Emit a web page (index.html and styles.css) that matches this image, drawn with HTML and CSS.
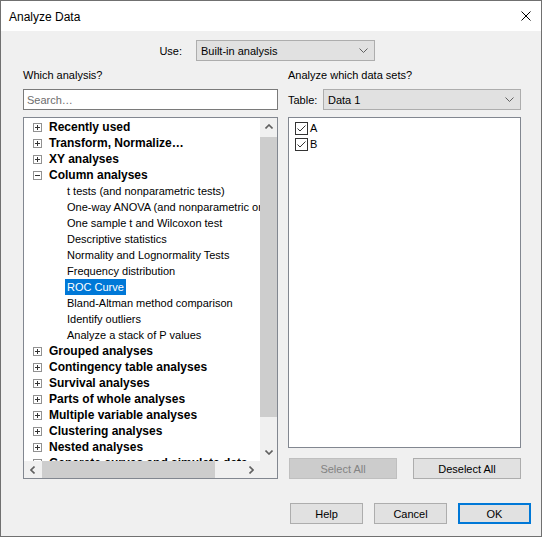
FILE: index.html
```html
<!DOCTYPE html>
<html lang="en">
  <head>
    <meta charset="UTF-8" />
    <title>Analyze Data</title>
    <link rel="stylesheet" href="styles.css">
  </head>
  <body>
    <div class="window">
      <div class="titlebar">
        <span class="title">Analyze Data</span>
        <svg class="close" width="10" height="10" viewBox="0 0 10 10">
          <path d="M0.5 0.5 L9.5 9.5 M9.5 0.5 L0.5 9.5" stroke="#000" stroke-width="1" fill="none" />
        </svg>
      </div>

      <div class="dialog">
        <div class="use-row">
          <span class="label use-label">Use:</span>
          <div class="combo use-combo">
            <span>Built-in analysis</span>
            <svg class="chevron" width="9" height="5" viewBox="0 0 9 5">
              <polyline points="0.5,0.5 4.5,4.5 8.5,0.5" stroke="#606060" fill="none" />
            </svg>
          </div>
        </div>

        <div class="columns">
          <div class="col">
            <div class="heading">Which analysis?</div>
            <input class="search" type="text" placeholder="Search…" />

            <div class="tree">
              <div class="tree-rows">
                <div class="row group"><span class="exp plus"></span>Recently used</div>
                <div class="row group"><span class="exp plus"></span>Transform, Normalize…</div>
                <div class="row group"><span class="exp plus"></span>XY analyses</div>
                <div class="row group"><span class="exp minus"></span>Column analyses</div>
                <div class="row item"><span>t tests (and nonparametric tests)</span></div>
                <div class="row item"><span>One-way ANOVA (and nonparametric or mixed)</span></div>
                <div class="row item"><span>One sample t and Wilcoxon test</span></div>
                <div class="row item"><span>Descriptive statistics</span></div>
                <div class="row item"><span>Normality and Lognormality Tests</span></div>
                <div class="row item"><span>Frequency distribution</span></div>
                <div class="row item"><span class="selected">ROC Curve</span></div>
                <div class="row item"><span>Bland-Altman method comparison</span></div>
                <div class="row item"><span>Identify outliers</span></div>
                <div class="row item"><span>Analyze a stack of P values</span></div>
                <div class="row group"><span class="exp plus"></span>Grouped analyses</div>
                <div class="row group"><span class="exp plus"></span>Contingency table analyses</div>
                <div class="row group"><span class="exp plus"></span>Survival analyses</div>
                <div class="row group"><span class="exp plus"></span>Parts of whole analyses</div>
                <div class="row group"><span class="exp plus"></span>Multiple variable analyses</div>
                <div class="row group"><span class="exp plus"></span>Clustering analyses</div>
                <div class="row group"><span class="exp plus"></span>Nested analyses</div>
                <div class="row group"><span class="exp plus"></span>Generate curves and simulate data</div>
              </div>

              <div class="vscroll">
                <div class="arrow">
                  <svg width="8" height="5" viewBox="0 0 8 5"><polyline points="0.5,4.5 4,1 7.5,4.5" stroke="#606060" stroke-width="1.6" fill="none" /></svg>
                </div>
                <div class="track"><div class="thumb"></div></div>
                <div class="arrow">
                  <svg width="8" height="5" viewBox="0 0 8 5"><polyline points="0.5,0.5 4,4 7.5,0.5" stroke="#606060" stroke-width="1.6" fill="none" /></svg>
                </div>
              </div>

              <div class="hscroll">
                <div class="arrow">
                  <svg width="5" height="8" viewBox="0 0 5 8"><polyline points="4.5,0.5 1,4 4.5,7.5" stroke="#606060" stroke-width="1.6" fill="none" /></svg>
                </div>
                <div class="track"><div class="thumb"></div></div>
                <div class="arrow">
                  <svg width="5" height="8" viewBox="0 0 5 8"><polyline points="0.5,0.5 4,4 0.5,7.5" stroke="#606060" stroke-width="1.6" fill="none" /></svg>
                </div>
              </div>

              <div class="corner"></div>
            </div>
          </div>

          <div class="col">
            <div class="heading">Analyze which data sets?</div>
            <div class="table-row">
              <span class="label">Table:</span>
              <div class="combo table-combo">
                <span>Data 1</span>
                <svg class="chevron" width="9" height="5" viewBox="0 0 9 5">
                  <polyline points="0.5,0.5 4.5,4.5 8.5,0.5" stroke="#606060" fill="none" />
                </svg>
              </div>
            </div>

            <div class="data-sets">
              <div class="check-row">
                <span class="checkbox">
                  <svg width="11" height="11" viewBox="0 0 11 11"><polyline points="1.5,5.5 4,8 9.5,2.5" stroke="#333" fill="none" /></svg>
                </span>A
              </div>
              <div class="check-row">
                <span class="checkbox">
                  <svg width="11" height="11" viewBox="0 0 11 11"><polyline points="1.5,5.5 4,8 9.5,2.5" stroke="#333" fill="none" /></svg>
                </span>B
              </div>
            </div>

            <div class="list-buttons">
              <button class="btn" disabled>Select All</button>
              <button class="btn">Deselect All</button>
            </div>
          </div>
        </div>

        <div class="dialog-buttons">
          <button class="btn">Help</button>
          <button class="btn">Cancel</button>
          <button class="btn default">OK</button>
        </div>
      </div>
    </div>
  </body>
</html>
```

FILE: styles.css
```css
body {
  margin: 0;
  font-family: "Liberation Sans", Arial, sans-serif;
  font-size: 11px;
  color: #000;
  background: #fff;
}
.window {
  width: 542px;
  height: 537px;
  box-sizing: border-box;
  border: 1px solid #707070;
  background: #f0f0f0;
  display: flex;
  flex-direction: column;
}
.titlebar {
  height: 30px;
  background: #fff;
  display: flex;
  align-items: center;
  justify-content: space-between;
  padding: 0 10px 0 8px;
}
.title {
  font-size: 12px;
  padding-top: 1px;
}
.close {
  display: block;
}
.dialog {
  flex: 1;
  padding: 0 10px 0 22px;
}
.use-row {
  display: flex;
  align-items: center;
  gap: 14px;
  margin-top: 9px;
}
.use-label {
  width: 159px;
  text-align: right;
}
.combo {
  height: 21px;
  box-sizing: border-box;
  border: 1px solid #adadad;
  background: #e1e1e1;
  display: flex;
  align-items: center;
  justify-content: space-between;
  padding: 0 6px 0 4px;
}
.use-combo {
  width: 179px;
}
.chevron {
  display: block;
}
.columns {
  display: grid;
  grid-template-columns: 255px 233px;
  column-gap: 10px;
  margin-top: 6px;
}
.heading {
  line-height: 16px;
  margin-bottom: 6px;
}
.search {
  display: block;
  width: 255px;
  height: 21px;
  box-sizing: border-box;
  margin: 0;
  border: 1px solid #7a7a7a;
  padding: 0 3px;
  font-family: inherit;
  font-size: 11px;
  outline: none;
}
.search::placeholder {
  color: #6d6d6d;
}
.tree {
  margin-top: 7px;
  height: 362px;
  box-sizing: border-box;
  border: 1px solid #828790;
  background: #fff;
  display: grid;
  grid-template-columns: 236px 17px;
  grid-template-rows: 343px 17px;
}
.tree-rows {
  overflow: hidden;
  padding-top: 1px;
}
.row {
  height: 16px;
  line-height: 16px;
  white-space: nowrap;
  display: flex;
  align-items: center;
}
.group {
  font-weight: bold;
  font-size: 12px;
  padding-left: 9px;
}
.item {
  padding-left: 41px;
}
.item span {
  padding: 0 2px;
}
.item .selected {
  background: #0078d7;
  color: #fff;
}
.exp {
  width: 9px;
  height: 9px;
  box-sizing: border-box;
  border: 1px solid #919191;
  margin-right: 7px;
  position: relative;
  flex: none;
}
.exp::before,
.plus::after {
  content: "";
  position: absolute;
  background: #333;
}
.exp::before {
  left: 1px;
  top: 3px;
  width: 5px;
  height: 1px;
}
.plus::after {
  left: 3px;
  top: 1px;
  width: 1px;
  height: 5px;
}
.vscroll,
.hscroll {
  background: #f0f0f0;
  display: flex;
}
.vscroll {
  flex-direction: column;
}
.arrow {
  width: 17px;
  height: 17px;
  flex: none;
  display: flex;
  align-items: center;
  justify-content: center;
}
.track {
  flex: 1;
}
.thumb {
  background: #cdcdcd;
}
.vscroll .thumb {
  margin-top: 2px;
  height: 280px;
}
.hscroll .thumb {
  margin-left: 1px;
  width: 173px;
  height: 17px;
}
.corner {
  background: #f0f0f0;
}
.table-row {
  display: flex;
  align-items: center;
  justify-content: space-between;
}
.table-combo {
  width: 198px;
}
.data-sets {
  margin-top: 7px;
  height: 331px;
  box-sizing: border-box;
  border: 1px solid #828790;
  background: #fff;
  padding: 2px 0 0 6px;
}
.check-row {
  height: 16px;
  display: flex;
  align-items: center;
}
.checkbox {
  width: 13px;
  height: 13px;
  box-sizing: border-box;
  border: 1px solid #333;
  background: #fff;
  margin-right: 2px;
  display: flex;
  align-items: center;
  justify-content: center;
}
.checkbox svg {
  display: block;
}
.list-buttons {
  display: flex;
  justify-content: space-between;
  margin-top: 10px;
  padding-left: 1px;
}
.btn {
  width: 108px;
  height: 21px;
  box-sizing: border-box;
  margin: 0;
  padding: 0;
  border: 1px solid #adadad;
  background: #e1e1e1;
  font-family: inherit;
  font-size: 11px;
  color: #000;
}
.btn:disabled {
  background: #cccccc;
  border-color: #bfbfbf;
  color: #838383;
}
.dialog-buttons {
  display: flex;
  justify-content: flex-end;
  gap: 11px;
  margin-top: 24px;
}
.dialog-buttons .btn {
  width: 73px;
}
.btn.default {
  border: 2px solid #0078d7;
}
```
